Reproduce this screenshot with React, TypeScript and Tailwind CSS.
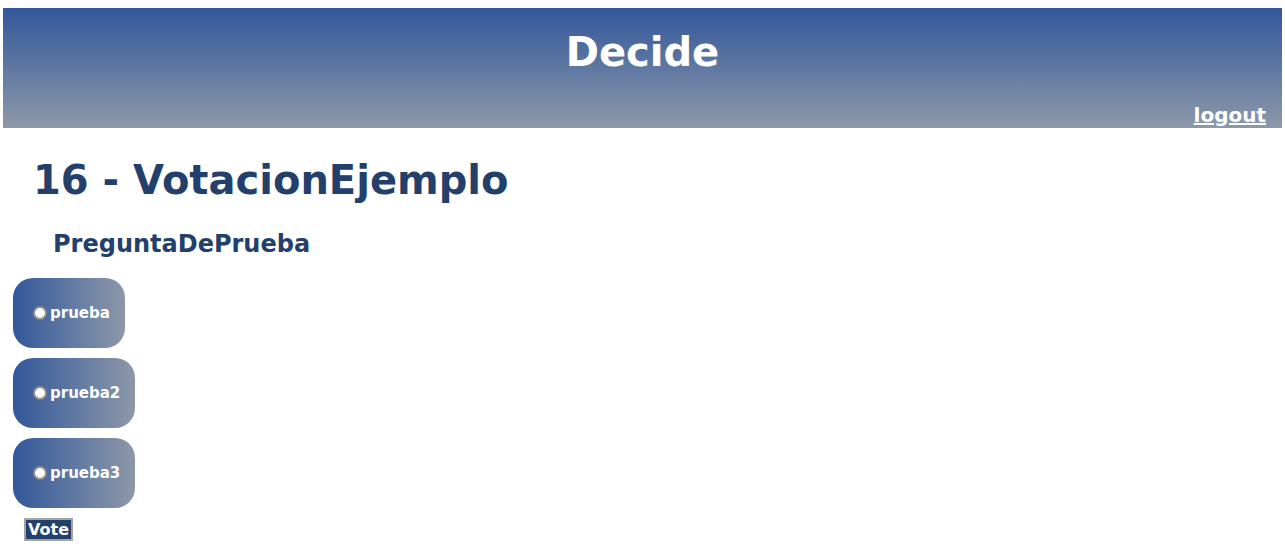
const OPTIONS = ['prueba', 'prueba2', 'prueba3'];

const font = { fontFamily: '"DejaVu Sans", Verdana, sans-serif' };

function OptionCard({ label, index }: { label: string; index: number }) {
  return (
    <label
      htmlFor={`opt-${index}`}
      className="flex items-center h-[70px] w-fit pl-[20px] pr-[15px] rounded-[20px] bg-gradient-to-r from-[#33579a] to-[#8d98a8] text-white font-bold text-[15px] leading-[18px]"
    >
      <span className="shrink-0 box-border w-[14px] h-[14px] rounded-full bg-white border-[2px] border-[#8e8e8e] mr-[3px]" />
      <span>{label}</span>
    </label>
  );
}

export default function App() {
  return (
    <div className="bg-white min-h-[550px] pt-[8px] px-[3px]" style={font}>
      <header className="h-[120px] flex flex-col bg-gradient-to-b from-[#33579a] to-[#8d98a8] text-white font-bold">
        <h1 className="pt-[20px] text-center text-[40px] leading-[48px]">Decide</h1>
        <div className="mt-auto pb-[1px] pr-[16px] flex justify-end">
          <a href="#" className="underline text-[20px] leading-[24px]">logout</a>
        </div>
      </header>

      <main className="text-[#233f6b] font-bold">
        <h2 className="mt-[28px] pl-[30px] text-[40px] leading-[48px]">16 - VotacionEjemplo</h2>
        <h3 className="mt-[26px] pl-[50px] text-[24px] leading-[28px]">PreguntaDePrueba</h3>

        <div className="mt-[20px] pl-[10px] flex flex-col gap-[10px]">
          {OPTIONS.map((o, i) => (
            <OptionCard key={o} label={o} index={i} />
          ))}
        </div>

        <div className="mt-[10px] pl-[21px]">
          <button className="h-[23px] px-[2px] bg-[#233f6b] border-[2px] border-[#a3a3a3] text-white text-[16px] leading-[17px] font-bold">
            Vote
          </button>
        </div>
      </main>
    </div>
  );
}
